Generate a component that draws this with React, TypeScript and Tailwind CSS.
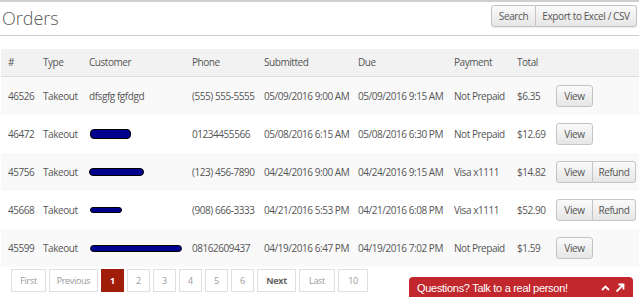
import React from "react";

type Row = {
  id: string;
  phone: string;
  sub: string;
  due: string;
  pay: string;
  total: string;
  name?: string;
  blob?: { w: number; h: number; ml: number };
  refund?: boolean;
};

const rows: Row[] = [
  { id: "46526", name: "dfsgfg fgfdgd", phone: "(555) 555-5555", sub: "05/09/2016 9:00 AM", due: "05/09/2016 9:15 AM", pay: "Not Prepaid", total: "$6.35" },
  { id: "46472", blob: { w: 41, h: 10, ml: 1 }, phone: "01234455566", sub: "05/08/2016 6:15 AM", due: "05/08/2016 6:30 PM", pay: "Not Prepaid", total: "$12.69" },
  { id: "45756", blob: { w: 55, h: 8, ml: 0 }, phone: "(123) 456-7890", sub: "04/24/2016 9:00 AM", due: "04/24/2016 9:15 AM", pay: "Visa x1111", total: "$14.82", refund: true },
  { id: "45668", blob: { w: 32, h: 6, ml: 1 }, phone: "(908) 666-3333", sub: "04/21/2016 5:53 PM", due: "04/21/2016 6:08 PM", pay: "Visa x1111", total: "$52.90", refund: true },
  { id: "45599", blob: { w: 92, h: 7, ml: 1 }, phone: "08162609437", sub: "04/19/2016 6:47 PM", due: "04/19/2016 7:02 PM", pay: "Not Prepaid", total: "$1.59" },
];

const btn =
  "h-[22px] text-[10px] tracking-[-0.4px] whitespace-nowrap text-[#555] bg-gradient-to-b from-[#fafafa] to-[#e6e6e6] border border-[#c4c4c4] flex items-center";

const cols = "grid grid-cols-[35px_46px_103px_72px_94px_96px_63px_39px_90px] whitespace-nowrap";

export default function App() {
  return (
    <div
      className="relative w-[639px] h-[297px] overflow-hidden bg-white border-t-2 border-[#cfcfcf] text-[#555]"
      style={{ fontFamily: '"Open Sans", "Liberation Sans", sans-serif' }}
    >
      <div className="flex items-start justify-between h-[34px] border-b border-[#cccccc] mx-0">
        <div className="pl-[2px] pt-[3px] text-[18px] leading-[26px] font-light text-[#5a5a5a]">Orders</div>
        <div className="flex mt-[3px] mr-[2px] rounded-[3px] shadow-[0_1px_1px_rgba(0,0,0,0.08)]">
          <button className={btn + " rounded-l-[3px] w-[45px] h-[21px] justify-center"}>Search</button>
          <button className={btn + " rounded-r-[3px] border-l-0 w-[101px] h-[21px] justify-center"}>Export to Excel / CSV</button>
        </div>
      </div>

      <div className="mt-[13px] ml-[1px] text-[10px] tracking-[-0.45px] text-[#555]">
        <div className={cols + " h-[28px] items-center bg-[#f2f2f2] border-b border-[#dcdcdc]"}>
          <div className="pl-[7px]">#</div>
          <div className="pl-[7px]">Type</div>
          <div className="pl-[7px]">Customer</div>
          <div className="pl-[7px]">Phone</div>
          <div className="pl-[7px]">Submitted</div>
          <div className="pl-[7px]">Due</div>
          <div className="pl-[7px]">Payment</div>
          <div className="pl-[7px]">Total</div>
          <div />
        </div>
        {rows.map((r, i) => (
          <div
            key={r.id}
            className={cols + " h-[38px] items-center " + (i % 2 === 0 ? "bg-[#f9f9f9]" : "bg-white")}
          >
            <div className="pl-[7px]">{r.id}</div>
            <div className="pl-[7px]">Takeout</div>
            <div className="pl-[7px] flex items-center">
              {r.name ? (
                r.name
              ) : (
                <span
                  className="block rounded-[4px] bg-[#00008f] border border-black"
                  style={{ width: r.blob!.w, height: r.blob!.h, marginLeft: r.blob!.ml }}
                />
              )}
            </div>
            <div className="pl-[7px]">{r.phone}</div>
            <div className="pl-[7px]">{r.sub}</div>
            <div className="pl-[7px]">{r.due}</div>
            <div className="pl-[7px]">{r.pay}</div>
            <div className="pl-[7px]">{r.total}</div>
            <div className="pl-[7px] flex">
              <button
                className={
                  btn +
                  " h-[22px] w-[37px] justify-center " +
                  (r.refund ? "rounded-l-[3px]" : "rounded-[3px]")
                }
              >
                View
              </button>
              {r.refund && (
                <button className={btn + " h-[22px] w-[43px] justify-center rounded-r-[3px] border-l-0"}>Refund</button>
              )}
            </div>
          </div>
        ))}
      </div>

      <div className="flex items-center mt-[2px] ml-[11px] gap-[3px] text-[9px] tracking-[-0.3px] text-[#999]">
        {[
          { t: "First", w: 35 },
          { t: "Previous", w: 49 },
          { t: "1", w: 23, active: true },
          { t: "2", w: 23 },
          { t: "3", w: 23 },
          { t: "4", w: 23 },
          { t: "5", w: 23 },
          { t: "6", w: 23 },
          { t: "Next", w: 39, bold: true },
          { t: "Last", w: 36 },
          { t: "10", w: 30 },
        ].map((p) => (
          <div
            key={p.t}
            className={
              "h-[23px] flex items-center justify-center border " +
              (p.active
                ? "bg-[#a01d0a] border-[#a01d0a] text-white font-bold"
                : "border-[#e0e0e0] bg-white") +
              (p.bold ? " font-bold text-[#666]" : "")
            }
            style={{ width: p.w }}
          >
            {p.t}
          </div>
        ))}
      </div>

      <div
        className="absolute left-[409px] top-[275px] w-[224px] h-[30px] bg-[#c1272d] rounded-t-[4px] flex items-start pt-[4px] pl-[8px] text-white"
        style={{ fontFamily: '"Liberation Sans", Arial, sans-serif' }}
      >
        <span className="text-[11px] leading-[14px] tracking-[-0.3px]">Questions? Talk to a real person!</span>
        <span className="ml-auto mr-[8px] flex items-center gap-[5px] mt-[2px]">
          <svg width="9" height="6" viewBox="0 0 9 6" fill="none" stroke="white" strokeWidth="1.8">
            <path d="M1 5 L4.5 1.5 L8 5" />
          </svg>
          <svg width="10" height="10" viewBox="0 0 10 10" fill="none" stroke="white" strokeWidth="1.8">
            <path d="M1.5 8.5 L8.5 1.5 M3.5 1.5 H8.5 V6.5" />
          </svg>
        </span>
      </div>
    </div>
  );
}
